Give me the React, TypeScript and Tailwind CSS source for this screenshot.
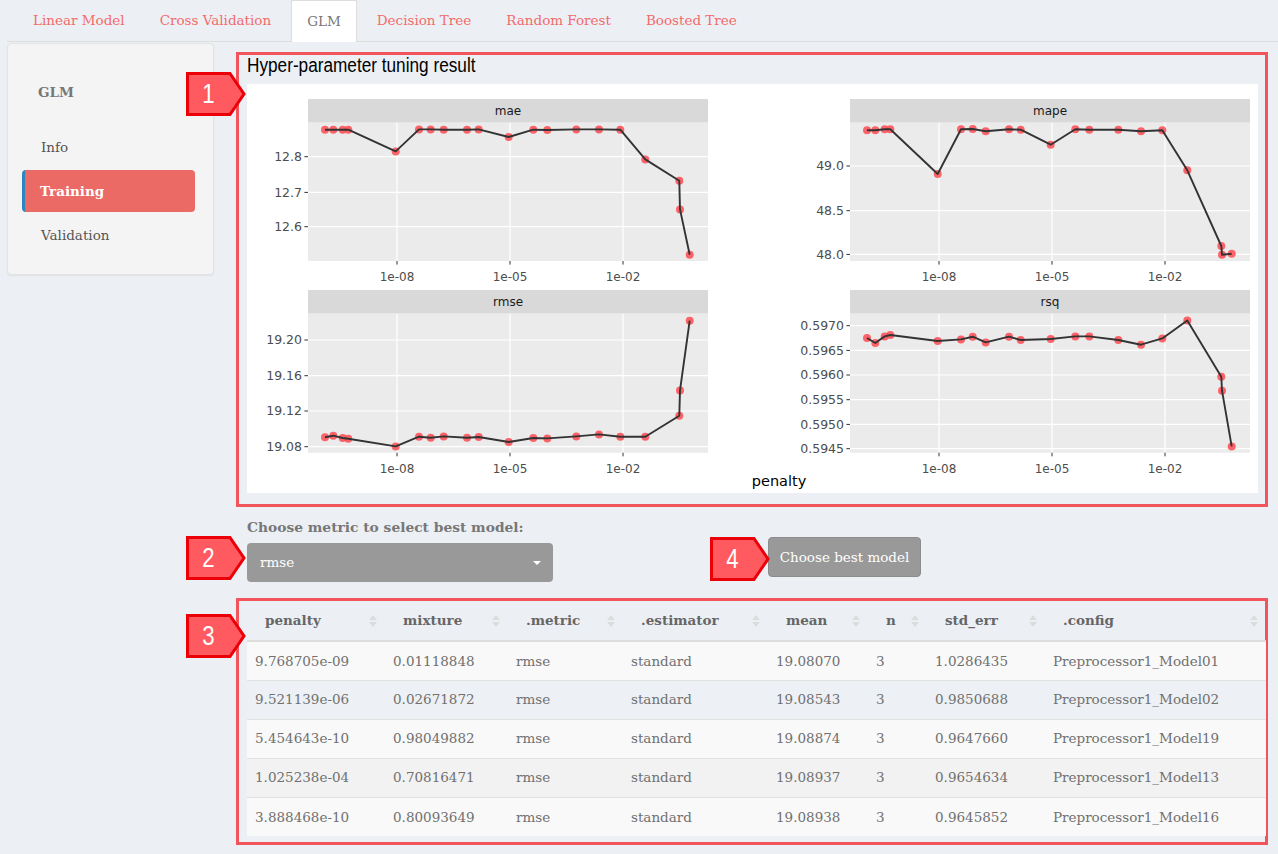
import React from 'react';

const SERIF = { fontFamily: '"DejaVu Serif", Georgia, serif' };
const NARROW = { fontFamily: '"Liberation Sans Narrow", "Arial Narrow", "Liberation Sans", sans-serif' };

const TABS = ['Linear Model', 'Cross Validation', 'GLM', 'Decision Tree', 'Random Forest', 'Boosted Tree'];

// shared penalty positions (px from panel left), log-scaled
const XS = [17, 25.3, 34.7, 40.3, 87.7, 111, 122.7, 135.7, 159, 170.7, 200.7, 225.3, 239.3, 268.3, 291, 312.3, 337.3, 371.3, 372, 381.7];
const XTICKS: [string, number][] = [['1e-08', 89], ['1e-05', 202], ['1e-02', 315]];

type Panel = {
  name: string;
  x: number;
  y: number;
  h: number;
  ys: number[];
  yticks: [string, number][];
};

const PANELS: Panel[] = [
  {
    name: 'mae', x: 61, y: 15, h: 138.3,
    ys: [7, 7, 7, 7, 28.7, 6.7, 6.7, 7, 7, 6.7, 14.3, 7, 7.3, 6.7, 6.7, 7, 36.7, 58, 86.7, 132],
    yticks: [['12.8', 34], ['12.7', 69.7], ['12.6', 104]],
  },
  {
    name: 'mape', x: 603, y: 15, h: 138.3,
    ys: [7.6, 7.6, 6.6, 6.6, 51.3, 6.6, 6.3, 8.6, 6.6, 7, 22, 6.6, 7, 7, 8.6, 7.6, 47.6, 123.3, 132, 131],
    yticks: [['49.0', 43.3], ['48.5', 88], ['48.0', 131.7]],
  },
  {
    name: 'rmse', x: 61, y: 206, h: 139,
    ys: [123.6, 122, 124.3, 125, 132.7, 123, 124, 122.7, 124, 123.3, 128.3, 124.3, 124.7, 122.7, 120.7, 123, 123, 102, 76.7, 7],
    yticks: [['19.20', 26.3], ['19.16', 62], ['19.12', 97.3], ['19.08', 133]],
  },
  {
    name: 'rsq', x: 603, y: 206, h: 139,
    ys: [24.3, 29.3, 22.7, 21.3, 27.3, 25.7, 23, 28.7, 23, 26.3, 25.3, 22.7, 22.7, 26.3, 31, 24.7, 6.7, 63, 77, 132.7],
    yticks: [['0.5970', 12], ['0.5965', 36.7], ['0.5960', 61.3], ['0.5955', 86], ['0.5950', 110.7], ['0.5945', 135]],
  },
];

const ROWS = [
  ['9.768705e-09', '0.01118848', 'rmse', 'standard', '19.08070', '3', '1.0286435', 'Preprocessor1_Model01'],
  ['9.521139e-06', '0.02671872', 'rmse', 'standard', '19.08543', '3', '0.9850688', 'Preprocessor1_Model02'],
  ['5.454643e-10', '0.98049882', 'rmse', 'standard', '19.08874', '3', '0.9647660', 'Preprocessor1_Model19'],
  ['1.025238e-04', '0.70816471', 'rmse', 'standard', '19.08937', '3', '0.9654634', 'Preprocessor1_Model13'],
  ['3.888468e-10', '0.80093649', 'rmse', 'standard', '19.08938', '3', '0.9645852', 'Preprocessor1_Model16'],
];

const COLS = [
  { label: 'penalty', w: 'w-[138px]' },
  { label: 'mixture', w: 'w-[123px]' },
  { label: '.metric', w: 'w-[115px]' },
  { label: '.estimator', w: 'w-[145px]' },
  { label: 'mean', w: 'w-[100px]' },
  { label: 'n', w: 'w-[59px]' },
  { label: 'std_err', w: 'w-[118px]' },
  { label: '.config', w: 'w-[221px]' },
];

const ROW_BG = ['bg-[#f9f9f9]', 'bg-[#edf0f4]', 'bg-[#f9f9f9]', 'bg-[#f2f2f2]', 'bg-[#f9f9f9]'];

function FacetPanel({ p }: { p: Panel }) {
  const top = p.y + 23.7;
  const bottom = top + p.h;
  const w = 400;
  const pts = XS.map((x, i) => `${p.x + x},${top + p.ys[i]}`).join(' ');
  return (
    <g>
      <rect x={p.x} y={p.y} width={w} height={23.7} fill="#d9d9d9" />
      <text x={p.x + w / 2} y={p.y + 16} textAnchor="middle" fontSize="12" fill="#1a1a1a">
        {p.name}
      </text>
      <rect x={p.x} y={top} width={w} height={p.h} fill="#ebebeb" />
      {p.yticks.map(([, ty]) => (
        <line key={ty} x1={p.x} x2={p.x + w} y1={top + ty} y2={top + ty} stroke="#fff" strokeWidth="1.2" />
      ))}
      {XTICKS.map(([, tx]) => (
        <line key={tx} x1={p.x + tx} x2={p.x + tx} y1={top} y2={bottom} stroke="#fff" strokeWidth="1.2" />
      ))}
      {p.yticks.map(([label, ty]) => (
        <g key={label}>
          <line x1={p.x - 3.6} x2={p.x} y1={top + ty} y2={top + ty} stroke="#333" strokeWidth="1" />
          <text x={p.x - 6} y={top + ty + 4.3} textAnchor="end" fontSize="12.5" fill="#4d4d4d">
            {label}
          </text>
        </g>
      ))}
      {XTICKS.map(([label, tx]) => (
        <g key={label}>
          <line x1={p.x + tx} x2={p.x + tx} y1={bottom} y2={bottom + 3.6} stroke="#333" strokeWidth="1" />
          <text x={p.x + tx} y={bottom + 20} textAnchor="middle" fontSize="12" fill="#4d4d4d">
            {label}
          </text>
        </g>
      ))}
      {XS.map((x, i) => (
        <circle key={i} cx={p.x + x} cy={top + p.ys[i]} r="4" fill="#ff4b52" fillOpacity="0.85" />
      ))}
      <polyline points={pts} fill="none" stroke="#333" strokeWidth="1.9" strokeLinejoin="round" />
    </g>
  );
}

function TuningPlot() {
  return (
    <svg width="1011" height="409" viewBox="0 0 1011 409" className="block bg-white" style={{ fontFamily: '"DejaVu Sans", Verdana, sans-serif' }}>
      {PANELS.map(p => (
        <FacetPanel key={p.name} p={p} />
      ))}
      <text x="532" y="402" textAnchor="middle" fontSize="14.5" fill="#000">
        penalty
      </text>
    </svg>
  );
}

function Callout({ n, className }: { n: number; className: string }) {
  return (
    <div className={`absolute w-[60px] h-[44px] ${className}`}>
      <svg width="60" height="44" viewBox="0 0 60 44" className="absolute inset-0">
        <polygon points="1.5,1.5 44,1.5 58,22 44,42.5 1.5,42.5" fill="#ff5a5f" stroke="#ec0008" strokeWidth="3" />
      </svg>
      <div className="relative flex h-full w-[45px] items-center justify-center">
        <span className="inline-block scale-x-[0.82] text-[27px] text-white" style={NARROW}>
          {n}
        </span>
      </div>
    </div>
  );
}

function SortIcon() {
  return (
    <span className="flex flex-col items-center gap-[2px]">
      <span className="h-0 w-0 border-x-[4px] border-b-[5px] border-x-transparent border-b-[#dcdcdc]" />
      <span className="h-0 w-0 border-x-[4px] border-t-[5px] border-x-transparent border-t-[#dcdcdc]" />
    </span>
  );
}

export default function App() {
  return (
    <div className="min-h-[854px] bg-[#ecf0f5] text-[13.5px] text-[#555]" style={SERIF}>
      {/* top tabs */}
      <div className="ml-[7px] flex h-[42px] border-b border-[#dddddd] pl-[11px] gap-[5px]">
        {TABS.map(t =>
          t === 'GLM' ? (
            <div key={t} className="flex h-[42px] items-center border border-b-0 border-[#dddddd] bg-white px-[15px] text-[#777]">
              {t}
            </div>
          ) : (
            <div key={t} className="flex h-[41px] items-center px-[15px] text-[#f26b6b]">
              {t}
            </div>
          )
        )}
      </div>

      <div className="flex">
        {/* sidebar */}
        <div className="ml-[7px] mt-[1px] h-[232px] w-[207px] rounded-[4px] border border-[#e3e3e3] bg-[#f4f4f4] pl-[14px] pr-[18px] pt-[38px] shadow-[0_1px_2px_rgba(0,0,0,0.06)]">
          <div className="pl-[16px] font-bold text-[#777]">GLM</div>
          <div className="mt-[24px] flex flex-col gap-[2px]">
            <div className="flex h-[42px] items-center pl-[19px]">Info</div>
            <div className="flex h-[42px] items-center rounded-[4px] border-l-[3px] border-[#2e86c1] bg-[#ec6a65] pl-[15px] font-bold text-white">
              Training
            </div>
            <div className="flex h-[42px] items-center pl-[19px]">Validation</div>
          </div>
        </div>

        {/* main */}
        <div className="relative ml-[22px] mt-[10px] w-[1032px]">
          <div className="border-[3px] border-[#f2545b] pb-[11px] pl-[8px] pr-[7px]">
            <div className="h-[21px] whitespace-nowrap leading-[21px]">
              <span className="inline-block origin-left scale-x-[0.86] text-[20px] text-black" style={NARROW}>
                Hyper-parameter tuning result
              </span>
            </div>
            <div className="mt-[8px]">
              <TuningPlot />
            </div>
          </div>

          <div className="flex pl-[11px]">
            <div className="w-[306px]">
              <div className="mt-[10px] h-[20px] whitespace-nowrap text-[13.8px] font-bold leading-[20px] text-[#777]">Choose metric to select best model:</div>
              <div className="mt-[6px] flex h-[39px] items-center justify-between rounded-[4px] bg-[#999999] pl-[13px] pr-[12px] text-white">
                <span>rmse</span>
                <span className="h-0 w-0 border-x-[4px] border-t-[4px] border-x-transparent border-t-white" />
              </div>
            </div>
            <div className="ml-[215px] mt-[30px] flex h-[40px] w-[153px] items-center justify-center rounded-[4px] border border-[#8c8c8c] bg-[#999999] text-white">
              Choose best model
            </div>
          </div>

          <div className="mt-[16px] border-[3px] border-[#f2545b] pb-[6px] pl-[8px]">
            <table className="w-[1019px] table-fixed border-collapse">
              <thead>
                <tr className="h-[40px] border-b-2 border-[#dddddd]">
                  {COLS.map(c => (
                    <th key={c.label} className={`${c.w} p-0 text-left font-bold text-[#666]`}>
                      <div className="flex items-center justify-between pl-[18px] pr-[8px]">
                        <span>{c.label}</span>
                        <SortIcon />
                      </div>
                    </th>
                  ))}
                </tr>
              </thead>
              <tbody>
                {ROWS.map((r, i) => (
                  <tr key={i} className={`h-[39px] border-t border-[#e2e2e2] ${ROW_BG[i]}`}>
                    {r.map((v, j) => (
                      <td key={j} className="px-[8px] text-[#707070]">
                        {v}
                      </td>
                    ))}
                  </tr>
                ))}
              </tbody>
            </table>
          </div>

          <Callout n={1} className="left-[-50px] top-[20px]" />
          <Callout n={2} className="left-[-50px] top-[484px]" />
          <Callout n={4} className="left-[474px] top-[485px]" />
          <Callout n={3} className="left-[-50px] top-[562px]" />
        </div>
      </div>
    </div>
  );
}
